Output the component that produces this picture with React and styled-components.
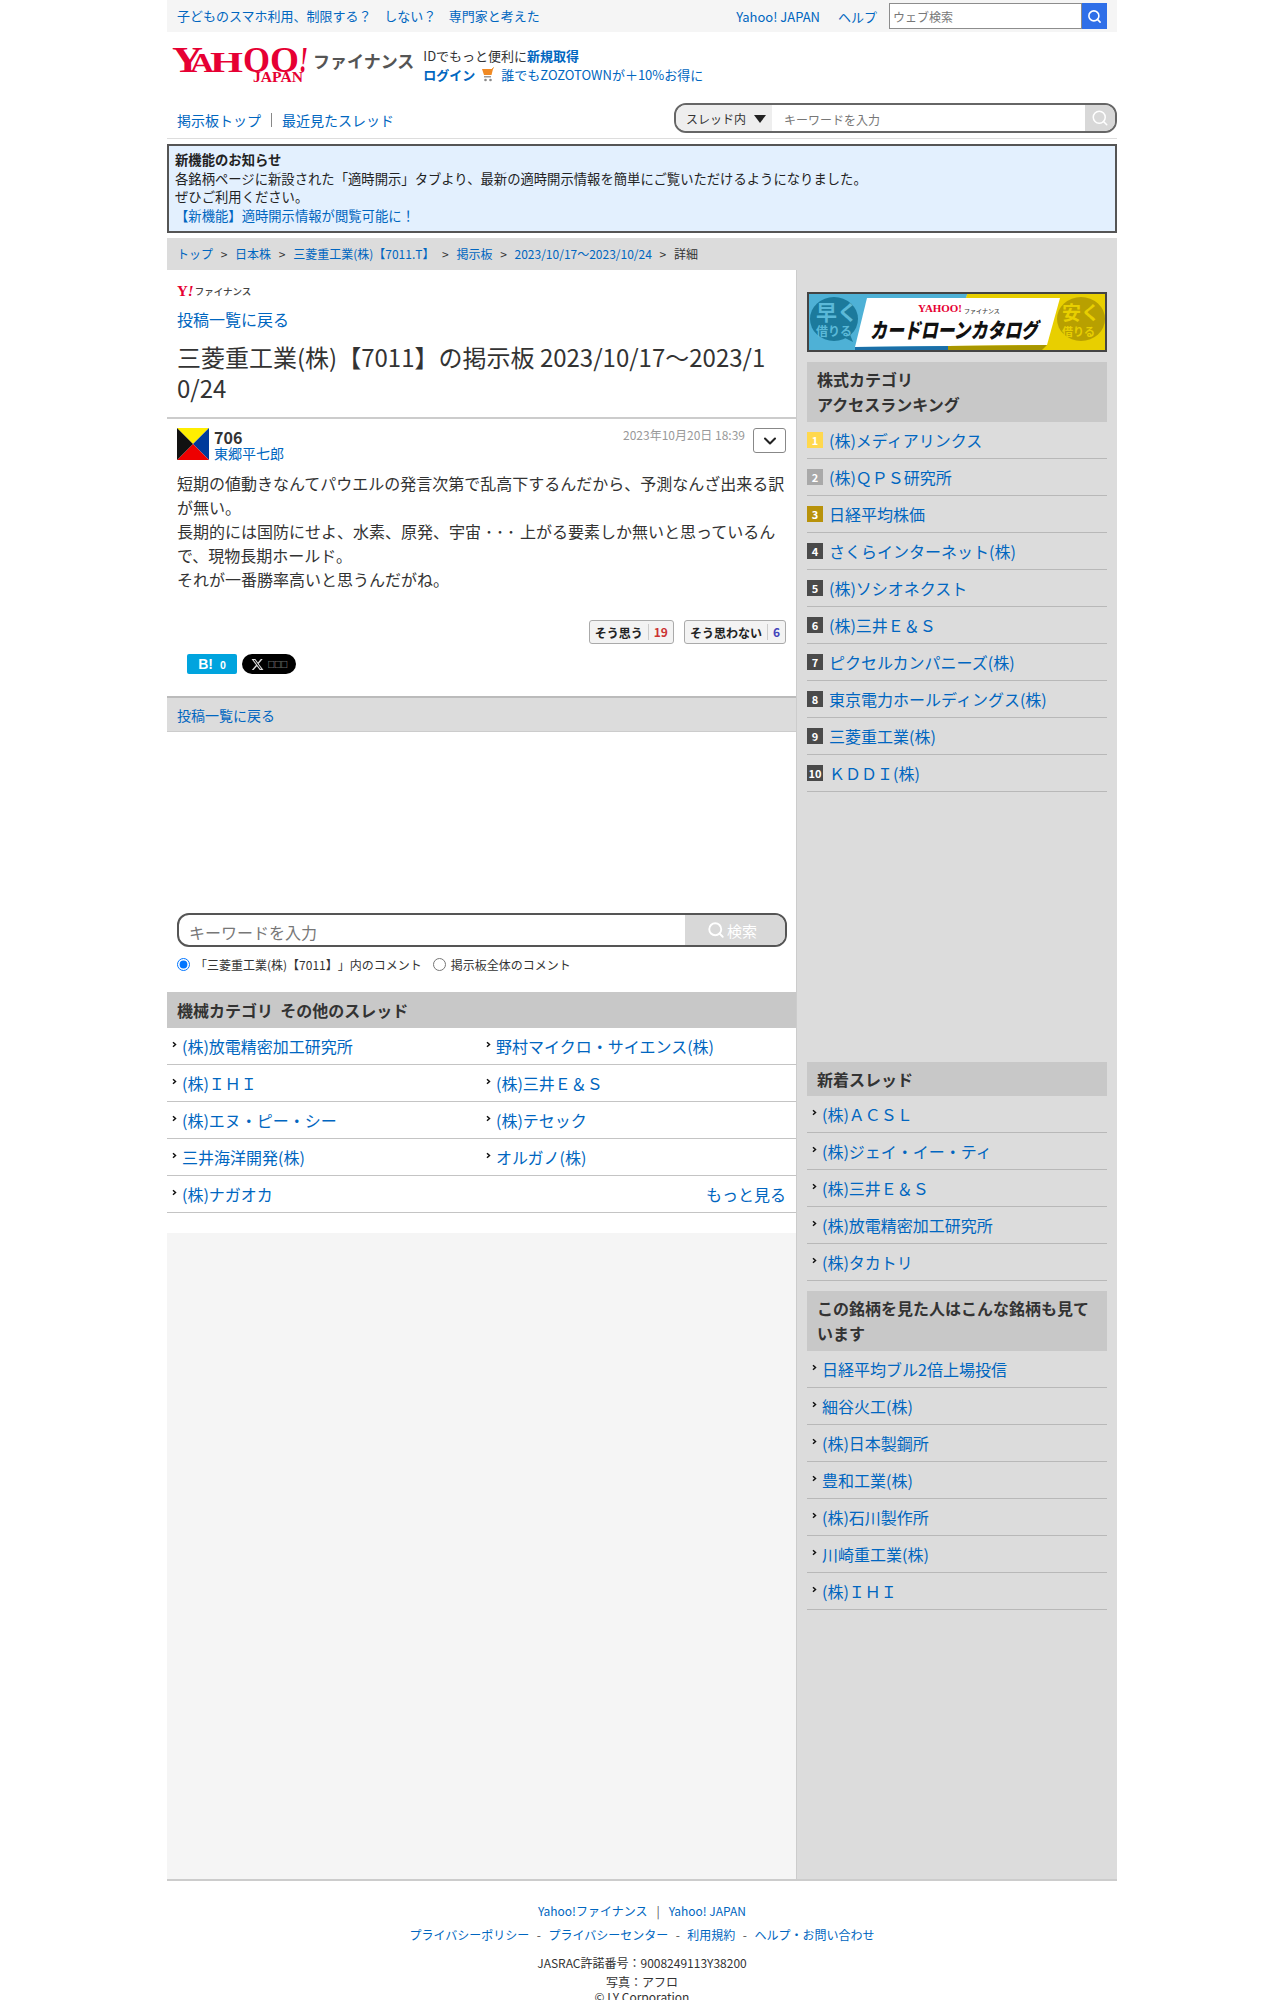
import React from 'react';
import styled, { createGlobalStyle } from 'styled-components';
import { Search, ChevronDown } from 'lucide-react';

const LINK = '#0066c0';

const GlobalStyle = createGlobalStyle`
    html, body {
        margin: 0;
        padding: 0;
        background: #fff;
    }
    body {
        font-family: 'Noto Sans CJK JP', 'Noto Sans', sans-serif;
        color: #333;
        text-spacing-trim: space-all;
    }
    * {
        box-sizing: border-box;
    }
`;

const Page = styled.div`
    width: 950px;
    margin: 0 auto;
`;

const A = styled.a`
    color: ${LINK};
    text-decoration: none;
    font-weight: ${props => (props.$bold ? 700 : 400)};
`;

/* top bar */
const TopBar = styled.div`
    display: flex;
    align-items: center;
    justify-content: space-between;
    height: 32px;
    padding: 0 10px;
    background: #f5f5f5;
    font-size: 13px;
`;

const TopLinks = styled.div`
    display: flex;
    gap: 12.5px;
    margin-top: -2px;
`;

const TopRight = styled.div`
    display: flex;
    align-items: center;
    gap: 18px;
`;

const WebSearch = styled.div`
    display: flex;
    width: 218px;
    height: 26px;
    margin-left: -6px;
`;

const WebInput = styled.div`
    flex: 1;
    padding-left: 3px;
    border: 1px solid #8d8d8d;
    background: #fff;
    color: #777;
    font-size: 12px;
    line-height: 25px;
`;

const WebButton = styled.div`
    display: flex;
    align-items: center;
    justify-content: center;
    width: 25px;
    background: #2f6fe8;
    color: #fff;
`;

/* logo and login */
const Header = styled.div`
    display: flex;
    height: 71px;
    padding: 15px 0 0 4px;
`;

const LogoSvg = styled.svg`
    display: block;
    width: 141px;
    height: 40px;
    overflow: visible;
`;

const LogoName = styled.div`
    margin: 1px 0 0 1px;
    color: #555;
    font-size: 17px;
    font-weight: 700;
    line-height: 26px;
`;

const LoginInfo = styled.div`
    margin: -1px 0 0 9px;
    font-size: 13px;
    line-height: 19px;
`;

const LoginLine = styled.div`
    display: flex;
    align-items: center;
    gap: 6px;
`;

/* nav */
const NavRow = styled.div`
    display: flex;
    align-items: center;
    justify-content: space-between;
    height: 36px;
    padding: 0 0 6px 10px;
    border-bottom: 1px solid #ddd;
    font-size: 14px;
`;

const NavLinks = styled.div`
    display: flex;
    align-items: center;
    padding-top: 4px;
`;

const NavDivider = styled.span`
    width: 1px;
    height: 14px;
    margin: 0 10px;
    background: #888;
`;

const BoardSearch = styled.div`
    display: flex;
    width: 443px;
    height: 30px;
    overflow: hidden;
    border: 2px solid #666;
    border-radius: 12px;
`;

const ScopeSelect = styled.div`
    display: flex;
    align-items: center;
    justify-content: space-between;
    width: 96px;
    padding: 2px 6px 0 10px;
    background: #eee;
    color: #333;
    font-size: 12px;
`;

const ScopeArrow = styled.span`
    width: 0;
    height: 0;
    border-left: 6px solid transparent;
    border-right: 6px solid transparent;
    border-top: 8px solid #222;
`;

const BoardInput = styled.div`
    flex: 1;
    padding: 2px 0 0 12px;
    background: #fff;
    color: #777;
    font-size: 12px;
    line-height: 26px;
`;

const BoardButton = styled.div`
    display: flex;
    align-items: center;
    justify-content: center;
    width: 30px;
    background: #d8d8d8;
    color: #fff;
`;

/* notice */
const Notice = styled.div`
    margin-top: 5px;
    padding: 5px 6px 6px;
    border: 2px solid #555;
    background: #e3f0fe;
    color: #222;
    font-size: 13.33px;
    line-height: 18.5px;
`;

const NoticeTitle = styled.div`
    font-weight: 700;
`;

/* breadcrumb */
const Breadcrumb = styled.div`
    display: flex;
    align-items: center;
    gap: 7.7px;
    height: 32px;
    margin-top: 5px;
    padding: 0 0 2px 10px;
    background: #dcdcdc;
    color: #333;
    font-size: 12px;
`;

/* main */
const Main = styled.div`
    display: grid;
    grid-template-columns: 630px 320px;
    min-height: 1611px;
    border-bottom: 2px solid #ccc;
`;

const LeftCol = styled.div`
    display: flex;
    flex-direction: column;
    border-right: 1px solid #ccc;
`;

const RightCol = styled.div`
    padding: 22px 10px 0;
    background: #dcdcdc;
`;

const TitleBlock = styled.div`
    height: 149px;
    padding: 13px 10px 0;
    border-bottom: 2px solid #ccc;
`;

const BrandRow = styled.div`
    display: flex;
    align-items: center;
    gap: 1px;
    height: 16px;
    color: #444;
    font-size: 9.500px;
    font-weight: 500;
`;

const BrandMark = styled.span`
    color: #e60033;
    font-family: 'Liberation Serif', serif;
    font-size: 15px;
    font-weight: 700;
    line-height: 16px;
`;

const BrandBang = styled.em`
    font-style: italic;
`;

const BackLink = styled.div`
    margin-top: 8px;
    font-size: 16px;
    line-height: 24px;
`;

const Title = styled.h1`
    margin: 10px 0 0;
    color: #333;
    font-size: 24px;
    font-weight: 400;
    line-height: 31px;
    word-break: break-all;
`;

const Post = styled.div`
    height: 277px;
    padding: 9px 10px 0;
`;

const PostHead = styled.div`
    display: flex;
    align-items: flex-start;
`;

const Avatar = styled.svg`
    display: block;
    width: 32px;
    height: 32px;
`;

const PostUser = styled.div`
    flex: 1;
    margin-left: 5px;
    padding-top: 1px;
`;

const PostNumber = styled.div`
    color: #333;
    font-size: 16px;
    font-weight: 700;
    line-height: 17px;
`;

const PostName = styled.div`
    font-size: 14px;
    line-height: 15px;
`;

const PostDate = styled.div`
    margin-right: 8px;
    color: #999;
    font-size: 12px;
    line-height: 14px;
`;

const MenuButton = styled.div`
    display: flex;
    align-items: center;
    justify-content: center;
    width: 33px;
    height: 25px;
    border: 1px solid #888;
    border-radius: 3px;
    color: #222;
`;

const PostBody = styled.div`
    margin-top: 10px;
    color: #333;
    font-size: 16px;
    line-height: 24px;
`;

const Dots = styled.span`
    padding: 0 2px 0 4px;
    letter-spacing: 3px;
`;

const VoteRow = styled.div`
    display: flex;
    justify-content: flex-end;
    gap: 10px;
    margin-top: 29px;
`;

const VoteButton = styled.div`
    display: flex;
    align-items: center;
    height: 24px;
    padding: 0 5px;
    border: 1px solid #aaa;
    border-radius: 3px;
    background: #f3f3f3;
    color: #222;
    font-size: 12px;
    font-weight: 700;
`;

const VoteCount = styled.span`
    margin-left: 5px;
    padding-left: 5px;
    border-left: 1px solid #ccc;
    color: ${props => props.$color};
    line-height: 16px;
`;

const ShareRow = styled.div`
    display: flex;
    gap: 5px;
    margin-top: 10px;
    padding-left: 10px;
`;

const HatenaButton = styled.div`
    display: flex;
    align-items: center;
    justify-content: center;
    gap: 7px;
    width: 50px;
    height: 20px;
    border-radius: 2px;
    background: #00a4de;
    color: #fff;
    font-size: 10px;
    font-weight: 700;
`;

const HatenaMark = styled.span`
    font-family: 'Liberation Sans', sans-serif;
    font-size: 14px;
`;

const XButton = styled.div`
    display: flex;
    align-items: center;
    justify-content: center;
    gap: 4px;
    width: 54px;
    height: 20px;
    border-radius: 10px;
    background: #000;
    color: #ccc;
    font-size: 7px;
    letter-spacing: -0.5px;
`;

const BackBar = styled.div`
    height: 36px;
    padding-left: 10px;
    border-top: 2px solid #bbb;
    border-bottom: 1px solid #ccc;
    background: #dcdcdc;
    font-size: 14px;
    line-height: 34px;
`;

const AdSpace = styled.div`
    height: 181px;
`;

const ThreadSearch = styled.div`
    display: flex;
    height: 34px;
    margin: 0 9px 0 10px;
    overflow: hidden;
    border: 2px solid #555;
    border-radius: 12px;
`;

const ThreadInput = styled.div`
    flex: 1;
    padding: 4px 0 0 10px;
    color: #777;
    font-size: 16px;
    line-height: 26px;
`;

const ThreadButton = styled.div`
    display: flex;
    align-items: center;
    justify-content: center;
    gap: 2px;
    width: 100px;
    padding-right: 6px;
    background: #d8d8d8;
    color: #fff;
    font-size: 15px;
`;

const RadioRow = styled.div`
    display: flex;
    align-items: center;
    height: 18px;
    margin: 8px 10px 0;
    color: #333;
    font-size: 12px;
`;

const Radio = styled.input`
    width: 13px;
    height: 13px;
    margin: 0 5px 0 ${props => props.$offset || 0}px;
`;

const LeftHeading = styled.div`
    height: 36px;
    margin-top: 19px;
    padding-left: 10px;
    background: #c8c8c8;
    color: #333;
    font-size: 16px;
    font-weight: 700;
    line-height: 37px;
`;

const ThreadGrid = styled.div`
    display: grid;
    grid-template-columns: 314px 1fr;
    font-size: 16px;
`;

const ThreadRow = styled.div`
    display: flex;
    align-items: center;
    justify-content: space-between;
    height: 37px;
    padding-right: ${props => (props.$wide ? '10px' : 0)};
    border-bottom: 1px solid #c4c4c4;
`;

const ThreadName = styled.div`
    display: flex;
    align-items: center;
    padding-left: 5px;
`;

const Arrow = styled.svg`
    flex: none;
    width: 5px;
    height: 7px;
    margin: -3px 5px 0 0;
`;

const WideCell = styled.div`
    grid-column: 1 / -1;
`;

const Filler = styled.div`
    flex: 1;
    margin-top: 20px;
    background: #f5f5f5;
`;

/* right column */
const Banner = styled.svg`
    display: block;
    width: 300px;
    height: 60px;
    margin-bottom: 10px;
`;

const SideHeading = styled.div`
    padding: 5px 10px ${props => (props.$single ? 4 : 5)}px;
    background: #c8c8c8;
    color: #333;
    font-size: 16px;
    font-weight: 700;
    line-height: 25px;
`;

const SideList = styled.div`
    margin-bottom: ${props => props.$gap || 0}px;
`;

const SideRow = styled.div`
    display: flex;
    align-items: center;
    height: 37px;
    border-bottom: 1px solid #b8b8b8;
    font-size: 16px;
`;

const RankBadge = styled.span`
    flex: none;
    width: 16px;
    height: 16px;
    margin-right: 6px;
    background: ${props => props.$bg};
    color: #fff;
    font-size: 11px;
    font-weight: 700;
    line-height: 16px;
    text-align: center;
`;

/* footer */
const Footer = styled.div`
    padding-top: 21px;
    color: #333;
    font-size: 12px;
    text-align: center;
`;

const FooterLinks = styled.div`
    display: flex;
    justify-content: center;
    gap: ${props => props.$gap}px;
    height: 24px;
    line-height: 18px;
`;

const FooterText = styled.div`
    line-height: ${props => props.$lh}px;
`;

const FooterSep = styled.span`
    color: #555;
`;

const rankColors = ['#ffd84d', '#a9a9a9', '#b8920a'];

const ranking = [
    '(株)メディアリンクス',
    '(株)ＱＰＳ研究所',
    '日経平均株価',
    'さくらインターネット(株)',
    '(株)ソシオネクスト',
    '(株)三井Ｅ＆Ｓ',
    'ピクセルカンパニーズ(株)',
    '東京電力ホールディングス(株)',
    '三菱重工業(株)',
    'ＫＤＤＩ(株)',
];

const newThreads = [
    '(株)ＡＣＳＬ',
    '(株)ジェイ・イー・ティ',
    '(株)三井Ｅ＆Ｓ',
    '(株)放電精密加工研究所',
    '(株)タカトリ',
];

const alsoViewed = [
    '日経平均ブル2倍上場投信',
    '細谷火工(株)',
    '(株)日本製鋼所',
    '豊和工業(株)',
    '(株)石川製作所',
    '川崎重工業(株)',
    '(株)ＩＨＩ',
];

const categoryThreads = [
    '(株)放電精密加工研究所',
    '野村マイクロ・サイエンス(株)',
    '(株)ＩＨＩ',
    '(株)三井Ｅ＆Ｓ',
    '(株)エヌ・ピー・シー',
    '(株)テセック',
    '三井海洋開発(株)',
    'オルガノ(株)',
];

const RowArrow = () => (
    <Arrow viewBox="0 0 5 7">
        <path d="M1 1.200 3.500 3.500 1 5.800" fill="none" stroke="#111" strokeWidth="1.500" />
    </Arrow>
);

const LogoLetter = ({ x, w, size, children, italic }) => (
    <text
        x={x}
        y="25"
        fill="#e60033"
        fontFamily="Liberation Serif"
        fontSize={size}
        fontWeight="700"
        fontStyle={italic ? 'italic' : 'normal'}
        textLength={w}
        lengthAdjust="spacingAndGlyphs"
    >
        {children}
    </text>
);

const Logo = () => (
    <LogoSvg viewBox="0 0 141 40">
        <LogoLetter x={1} w={31} size={36}>Y</LogoLetter>
        <LogoLetter x={19} w={24} size={28}>A</LogoLetter>
        <LogoLetter x={39} w={33} size={30}>H</LogoLetter>
        <LogoLetter x={72} w={27} size={36}>O</LogoLetter>
        <LogoLetter x={99} w={29} size={36}>O</LogoLetter>
        <LogoLetter x={128} w={9} size={36} italic>!</LogoLetter>
        <text x="82" y="35" fill="#e60033" fontFamily="Liberation Serif" fontSize="15" fontWeight="700" textLength="50" lengthAdjust="spacingAndGlyphs">
            JAPAN
        </text>
    </LogoSvg>
);

const CartIcon = () => (
    <svg width="14" height="15" viewBox="0 0 14 15">
        <path d="M1 2h11l-1.500 6H3z" fill="#f08a24" />
        <path d="M3 9h7v1.500H3z" fill="#9a9a9a" />
        <circle cx="4.500" cy="13" r="1.300" fill="#888" />
        <circle cx="9.500" cy="13" r="1.300" fill="#888" />
        <path d="M11 2l2-1.500" stroke="#f08a24" strokeWidth="1" />
    </svg>
);

const LoanBanner = () => (
    <Banner viewBox="0 0 300 60">
        <path d="M0 0H161L141 60H0z" fill="#4eb1d6" />
        <path d="M161 0H300V60H141z" fill="#e8cf00" />
        <ellipse cx="27" cy="27" rx="24" ry="22" fill="#1c7a9c" />
        <path d="M34 44l12 6-4-10z" fill="#1c7a9c" />
        <ellipse cx="274" cy="27" rx="24" ry="22" fill="#b8a000" />
        <path d="M60 6H253L240 53 48 55z" fill="#fff" />
        <path d="M48 55 141 54V58H48z" fill="#1b6fa8" />
        <path d="M141 54 240 53 235 58H141z" fill="#a89600" />
        <text x="9" y="28" fill="#5bb9d8" fontSize="21" fontWeight="700">早く</text>
        <text x="9" y="44" fill="#5bb9d8" fontSize="12" fontWeight="700">借りる</text>
        <text x="255" y="28" fill="#e8cf00" fontSize="19" fontWeight="700">安く</text>
        <text x="255" y="44" fill="#e8cf00" fontSize="11" fontWeight="700">借りる</text>
        <text x="111" y="20" fill="#e60033" fontFamily="Liberation Serif" fontSize="11" fontWeight="700" textLength="44" lengthAdjust="spacingAndGlyphs">YAHOO!</text>
        <text x="157" y="21" fill="#444" fontSize="6" fontWeight="500">ファイナンス</text>
        <text x="63" y="46" fill="#111" fontSize="21" fontWeight="900" fontStyle="italic" textLength="168" lengthAdjust="spacingAndGlyphs">カードローンカタログ</text>
        <rect x="1" y="1" width="298" height="58" fill="none" stroke="#444" strokeWidth="2" />
    </Banner>
);

const App = () => (
    <Page>
        <GlobalStyle />
        <TopBar>
            <TopLinks>
                <A>子どものスマホ利用、制限する？</A>
                <A>しない？</A>
                <A>専門家と考えた</A>
            </TopLinks>
            <TopRight>
                <A>Yahoo! JAPAN</A>
                <A>ヘルプ</A>
                <WebSearch>
                    <WebInput>ウェブ検索</WebInput>
                    <WebButton>
                        <Search size={15} strokeWidth={2.5} />
                    </WebButton>
                </WebSearch>
            </TopRight>
        </TopBar>

        <Header>
            <Logo />
            <LogoName>ファイナンス</LogoName>
            <LoginInfo>
                <div>
                    IDでもっと便利に<A $bold>新規取得</A>
                </div>
                <LoginLine>
                    <A $bold>ログイン</A>
                    <CartIcon />
                    <A>誰でもZOZOTOWNが＋10%お得に</A>
                </LoginLine>
            </LoginInfo>
        </Header>

        <NavRow>
            <NavLinks>
                <A>掲示板トップ</A>
                <NavDivider />
                <A>最近見たスレッド</A>
            </NavLinks>
            <BoardSearch>
                <ScopeSelect>
                    スレッド内
                    <ScopeArrow />
                </ScopeSelect>
                <BoardInput>キーワードを入力</BoardInput>
                <BoardButton>
                    <Search size={18} strokeWidth={2} />
                </BoardButton>
            </BoardSearch>
        </NavRow>

        <Notice>
            <NoticeTitle>新機能のお知らせ</NoticeTitle>
            <div>各銘柄ページに新設された「適時開示」タブより、最新の適時開示情報を簡単にご覧いただけるようになりました。</div>
            <div>ぜひご利用ください。</div>
            <A>【新機能】適時開示情報が閲覧可能に！</A>
        </Notice>

        <Breadcrumb>
            <A>トップ</A>
            <span>&gt;</span>
            <A>日本株</A>
            <span>&gt;</span>
            <A>三菱重工業(株)【7011.T】</A>
            <span>&gt;</span>
            <A>掲示板</A>
            <span>&gt;</span>
            <A>2023/10/17～2023/10/24</A>
            <span>&gt;</span>
            <span>詳細</span>
        </Breadcrumb>

        <Main>
            <LeftCol>
                <TitleBlock>
                    <BrandRow>
                        <BrandMark>
                            Y<BrandBang>!</BrandBang>
                        </BrandMark>
                        ファイナンス
                    </BrandRow>
                    <BackLink>
                        <A>投稿一覧に戻る</A>
                    </BackLink>
                    <Title>三菱重工業(株)【7011】の掲示板 2023/10/17～2023/10/24</Title>
                </TitleBlock>

                <Post>
                    <PostHead>
                        <Avatar viewBox="0 0 32 32">
                            <path d="M0 0H32L16 16z" fill="#ffee00" />
                            <path d="M32 0V32L16 16z" fill="#003a9b" />
                            <path d="M0 32H32L16 16z" fill="#ee0000" />
                            <path d="M0 0V32L16 16z" fill="#111" />
                        </Avatar>
                        <PostUser>
                            <PostNumber>706</PostNumber>
                            <PostName>
                                <A>東郷平七郎</A>
                            </PostName>
                        </PostUser>
                        <PostDate>2023年10月20日 18:39</PostDate>
                        <MenuButton>
                            <ChevronDown size={20} strokeWidth={2.5} />
                        </MenuButton>
                    </PostHead>
                    <PostBody>
                        短期の値動きなんてパウエルの発言次第で乱高下するんだから、予測なんざ出来る訳が無い。
                        <br />
                        長期的には国防にせよ、水素、原発、宇宙<Dots>･･･</Dots>上がる要素しか無いと思っているんで、現物長期ホールド。
                        <br />
                        それが一番勝率高いと思うんだがね。
                    </PostBody>
                    <VoteRow>
                        <VoteButton>
                            そう思う<VoteCount $color="#c33">19</VoteCount>
                        </VoteButton>
                        <VoteButton>
                            そう思わない<VoteCount $color="#44b">6</VoteCount>
                        </VoteButton>
                    </VoteRow>
                    <ShareRow>
                        <HatenaButton>
                            <HatenaMark>B!</HatenaMark>0
                        </HatenaButton>
                        <XButton>
                            <svg width="13" height="13" viewBox="0 0 24 24">
                                <path
                                    d="M18.200 2h3.400l-7.400 8.500L23 22h-6.800l-5.300-7-6.100 7H1.400l7.900-9.100L1 2h7l4.800 6.400zM17 20h1.900L7 3.900H5z"
                                    fill="#ddd"
                                />
                            </svg>
                            □□□
                        </XButton>
                    </ShareRow>
                </Post>

                <BackBar>
                    <A>投稿一覧に戻る</A>
                </BackBar>
                <AdSpace />

                <ThreadSearch>
                    <ThreadInput>キーワードを入力</ThreadInput>
                    <ThreadButton>
                        <Search size={18} strokeWidth={2.5} />
                        検索
                    </ThreadButton>
                </ThreadSearch>
                <RadioRow>
                    <Radio type="radio" name="scope" defaultChecked readOnly />
                    「三菱重工業(株)【7011】」内のコメント
                    <Radio type="radio" name="scope" $offset={11} readOnly />
                    掲示板全体のコメント
                </RadioRow>

                <LeftHeading>機械カテゴリ&nbsp;&nbsp;その他のスレッド</LeftHeading>
                <ThreadGrid>
                    {categoryThreads.map(name => (
                        <ThreadRow key={name}>
                            <ThreadName>
                                <RowArrow />
                                <A>{name}</A>
                            </ThreadName>
                        </ThreadRow>
                    ))}
                    <WideCell>
                        <ThreadRow $wide>
                            <ThreadName>
                                <RowArrow />
                                <A>(株)ナガオカ</A>
                            </ThreadName>
                            <A>もっと見る</A>
                        </ThreadRow>
                    </WideCell>
                </ThreadGrid>
                <Filler />
            </LeftCol>

            <RightCol>
                <LoanBanner />
                <SideHeading>
                    株式カテゴリ
                    <br />
                    アクセスランキング
                </SideHeading>
                <SideList $gap={270}>
                    {ranking.map((name, i) => (
                        <SideRow key={name}>
                            <RankBadge $bg={rankColors[i] || '#4a4a4a'}>{i + 1}</RankBadge>
                            <A>{name}</A>
                        </SideRow>
                    ))}
                </SideList>

                <SideHeading $single>新着スレッド</SideHeading>
                <SideList $gap={10}>
                    {newThreads.map(name => (
                        <ThreadName as={SideRow} key={name}>
                            <RowArrow />
                            <A>{name}</A>
                        </ThreadName>
                    ))}
                </SideList>

                <SideHeading>この銘柄を見た人はこんな銘柄も見ています</SideHeading>
                <SideList>
                    {alsoViewed.map(name => (
                        <ThreadName as={SideRow} key={name}>
                            <RowArrow />
                            <A>{name}</A>
                        </ThreadName>
                    ))}
                </SideList>
            </RightCol>
        </Main>

        <Footer>
            <FooterLinks $gap={9}>
                <A>Yahoo!ファイナンス</A>
                <FooterSep>|</FooterSep>
                <A>Yahoo! JAPAN</A>
            </FooterLinks>
            <FooterLinks $gap={7.5}>
                <A>プライバシーポリシー</A>
                <FooterSep>-</FooterSep>
                <A>プライバシーセンター</A>
                <FooterSep>-</FooterSep>
                <A>利用規約</A>
                <FooterSep>-</FooterSep>
                <A>ヘルプ・お問い合わせ</A>
            </FooterLinks>
            <FooterText $lh={25}>JASRAC許諾番号：9008249113Y38200</FooterText>
            <FooterText $lh={14}>写真：アフロ</FooterText>
            <FooterText $lh={16}>© LY Corporation</FooterText>
        </Footer>
    </Page>
);

export default App;
